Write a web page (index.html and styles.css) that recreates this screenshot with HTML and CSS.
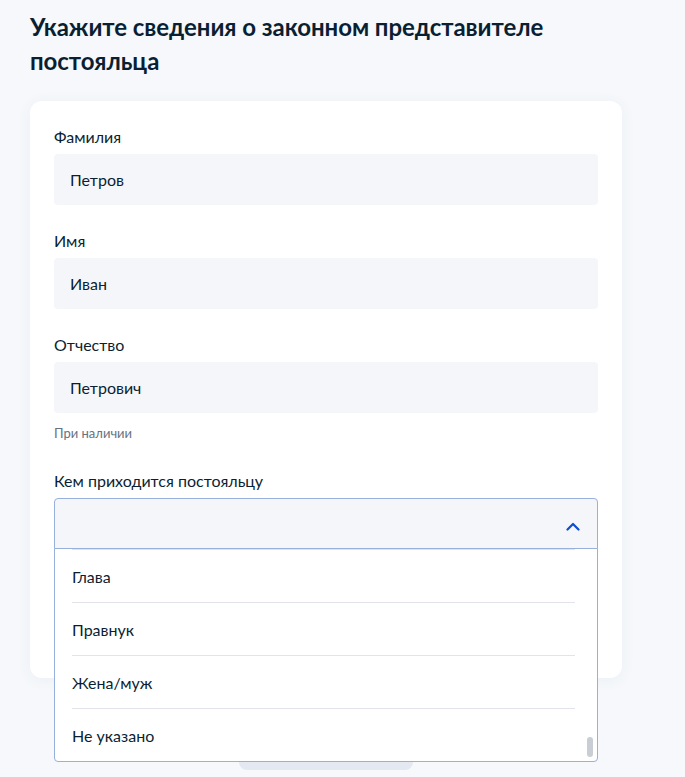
FILE: index.html
```html
<!DOCTYPE html>
<html lang="ru">
<head>
<meta charset="utf-8">
<link rel="stylesheet" href="styles.css">
</head>
<body>
<main class="page">
  <h1 class="title">Укажите сведения о законном представителе постояльца</h1>
  <section class="card">
    <div class="field">
      <div class="label">Фамилия</div>
      <div class="input">Петров</div>
    </div>
    <div class="field">
      <div class="label">Имя</div>
      <div class="input">Иван</div>
    </div>
    <div class="field">
      <div class="label">Отчество</div>
      <div class="input">Петрович</div>
      <div class="hint">При наличии</div>
    </div>
    <div class="field field-select">
      <div class="label">Кем приходится постояльцу</div>
      <div class="select-wrap">
        <div class="select">
          <svg class="chevron" width="14" height="9" viewBox="0 0 14 9"><path d="M1.5 7.5 L7 2 L12.5 7.5" fill="none" stroke="#0d4cd3" stroke-width="2.2" stroke-linecap="round" stroke-linejoin="round"/></svg>
        </div>
        <div class="dropdown">
          <div class="option">Глава</div>
          <div class="option">Правнук</div>
          <div class="option">Жена/муж</div>
          <div class="option">Не указано</div>
          <div class="thumb"></div>
        </div>
      </div>
      <div class="filler"></div>
    </div>
  </section>
  <div class="button-row"><div class="button"></div></div>
</main>
</body>
</html>
```
FILE: styles.css
```css
* { box-sizing: border-box; }
html, body { margin: 0; padding: 0; }
body {
  background: #f6f8fb;
  font-family: Lato, "Noto Sans", sans-serif;
  color: #0b1f33;
  width: 685px;
  height: 777px;
  overflow: hidden;
}
.page {
  padding: 10px 63px 0 30px;
}
.title {
  margin: 0;
  font-size: 24px;
  line-height: 34px;
  font-weight: 700;
  letter-spacing: -0.05px;
}
.card {
  margin-top: 23px;
  background: #ffffff;
  border-radius: 12px;
  box-shadow: 0 2px 14px rgba(86, 108, 150, 0.07);
  padding: 24px 24px 24px 24px;
  display: flex;
  flex-direction: column;
  gap: 24px;
}
.label {
  font-size: 16px;
  line-height: 24px;
  margin-bottom: 5px;
}
.input {
  height: 51px;
  background: #f5f6f9;
  border-radius: 4px;
  padding: 0 16px;
  display: flex;
  align-items: center;
  font-size: 16px;
}
.hint {
  margin-top: 10px;
  font-size: 13px;
  line-height: 20px;
  color: #66727f;
}
.field-select { margin-top: 2px; }
.select-wrap { position: relative; }
.select {
  height: 51px;
  background: #f5f6f9;
  border: 1.5px solid #98b0dc;
  border-radius: 4px 4px 0 0;
  display: flex;
  align-items: center;
  justify-content: flex-end;
  padding-right: 17px;
  padding-top: 6px;
}
.chevron { display: block; }
.dropdown {
  position: absolute;
  left: 0;
  right: 0;
  top: 100%;
  margin-top: -1px;
  background: #ffffff;
  border: 1.5px solid #98b0dc;
  border-radius: 0 0 4px 4px;
  height: 214px;
  padding: 0 22px 0 17px;
  z-index: 2;
}
.option {
  height: 53px;
  display: flex;
  align-items: center;
  font-size: 16px;
  border-top: 1px solid #e1e4e9;
  padding-top: 1px;
}
.thumb {
  position: absolute;
  right: 4px;
  bottom: 4px;
  width: 6px;
  height: 20px;
  border-radius: 3px;
  background: #c9cdd4;
}
.filler { height: 105px; }
.button-row {
  display: flex;
  justify-content: center;
  margin-top: 44px;
}
.button {
  width: 174px;
  height: 48px;
  border-radius: 8px;
  background: #e3e8f1;
}
```
